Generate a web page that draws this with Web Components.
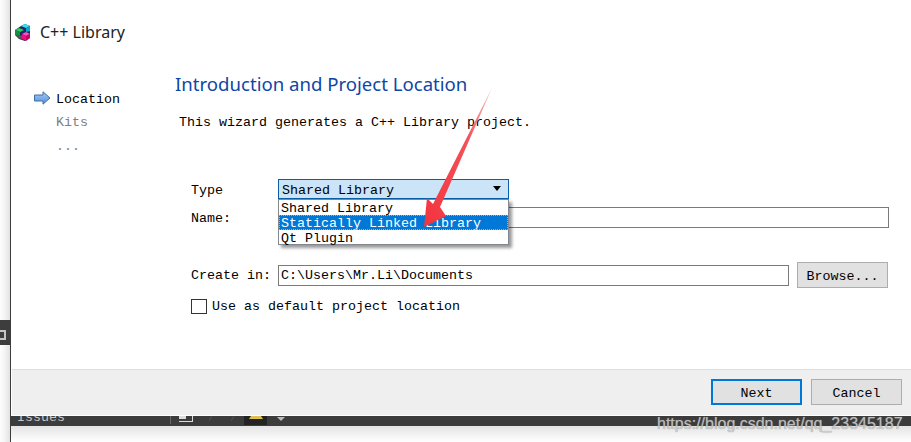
<!DOCTYPE html>
<html>
<head>
<meta charset="utf-8">
<title>C++ Library</title>
<style>
  html, body { margin: 0; padding: 0; background: #fff; }
  body { width: 911px; height: 442px; overflow: hidden; font-family: "Liberation Mono", monospace; font-size: 13.33px; color: #000; }
</style>
</head>
<body>

<wizard-page>
  <wizard-header slot="header">C++ Library</wizard-header>
  <wizard-steps slot="steps"></wizard-steps>

  <h-title>Introduction and Project Location</h-title>
  <intro-text>This wizard generates a C++ Library project.</intro-text>

  <form-row label="Type" nudge style="margin-top:46px">
    <qt-combo value="Shared Library"></qt-combo>
  </form-row>
  <form-row label="Name:" nudge style="margin-top:8px">
    <qt-field></qt-field>
  </form-row>
  <form-row label="Create in:" style="margin-top:34px">
    <qt-field value="C:\Users\Mr.Li\Documents"></qt-field>
    <qt-button style="margin-left:8px;margin-right:1px">Browse...</qt-button>
  </form-row>
  <qt-check style="margin-top:11px">Use as default project location</qt-check>

  <wizard-footer slot="footer">
    <qt-button primary>Next</qt-button>
    <qt-button>Cancel</qt-button>
  </wizard-footer>
  <issues-bar slot="bar"></issues-bar>
</wizard-page>

<red-arrow></red-arrow>
<water-mark>https://blog.csdn.net/qq_23345187</water-mark>

<script>
// small helper so each element only has to give its markup
class Base extends HTMLElement {
  constructor() {
    super();
    this.attachShadow({ mode: 'open' });
    this.shadowRoot.innerHTML = this.markup();
  }
  markup() { return ''; }
}

class WizardPage extends Base {
  markup() {
    return `
    <style>
      :host { display: flex; width: 911px; height: 442px; position: relative; }
      .strip { width: 10px; flex: none; background: linear-gradient(to right, #fdfdfd, #f6f6f6 40%, #e2e2e2); }
      .tab { position: absolute; left: 0; top: 320px; width: 10px; height: 25px; background: #3d3d3d; }
      .tab i { position: absolute; left: -3px; top: 10px; width: 5px; height: 6px; border: 2px solid #c4c4c4; }
      .line { width: 1px; flex: none; background: #3c3c3c; }
      .main { flex: 1; display: flex; flex-direction: column; min-width: 0; }
      .body { display: flex; flex: 1; min-height: 0; }
      .content { flex: 1; display: flex; flex-direction: column; padding: 5px 22px 0 0; min-width: 0; }
      .fade { height: 16px; flex: none; background: linear-gradient(#e4e4e4, #fff); }
    </style>
    <div class="strip"></div>
    <div class="tab"><i></i></div>
    <div class="line"></div>
    <div class="main">
      <slot name="header"></slot>
      <div class="body">
        <slot name="steps"></slot>
        <div class="content"><slot></slot></div>
      </div>
      <slot name="footer"></slot>
      <slot name="bar"></slot>
      <div class="fade"></div>
    </div>`;
  }
}

class WizardHeader extends Base {
  markup() {
    return `
    <style>
      :host { display: flex; align-items: center; height: 64px; padding: 0 0 0 4px; box-sizing: border-box; font: 16px "Noto Sans", "Open Sans", sans-serif; color: #222; }
      svg { width: 16px; height: 17px; margin-right: 9px; flex: none; }
    </style>
    <svg viewBox="0 0 16 17">
      <path d="M0 6 6 2 10 0 15 2V14L10 17 4 15 0 11Z" fill="#1b2a6a"/>
      <path d="M6 2 10 0 15 2 11 4Z" fill="#36e4ee"/>
      <path d="M11 4 15 2V7L11 8Z" fill="#0aa6c8"/>
      <path d="M0 6 4 4 9 6 5 8Z" fill="#2fd05a"/>
      <path d="M0 6 5 8V12L0 11Z" fill="#149038"/>
      <path d="M7 10 11 8 15 10 11 12Z" fill="#ff4fc0"/>
      <path d="M7 10 11 12V17L7 15Z" fill="#e8107c"/>
      <path d="M11 12 15 10V14L11 17Z" fill="#c00a60"/>
      <path d="M1 11 5 12 7 11V15L3 14Z" fill="#55584a"/>
    </svg>
    <slot></slot>`;
  }
}

class WizardSteps extends Base {
  markup() {
    return `
    <style>
      :host { display: block; width: 164px; flex: none; padding: 22px 0 0 23px; box-sizing: border-box; }
      div { display: flex; align-items: center; height: 24px; box-sizing: border-box; color: #808080; padding-left: 22px; }
      .on { color: #000; padding-left: 0; padding-top: 2px; }
      svg { width: 17px; height: 14px; margin: -2px 5px 0 0; flex: none; }
    </style>
    <div class="on">
      <svg viewBox="0 0 17 14">
        <defs><linearGradient id="a" x1="0" y1="0" x2="0" y2="1"><stop offset="0" stop-color="#a9ccf5"/><stop offset="1" stop-color="#4f8fdc"/></linearGradient></defs>
        <path d="M.5 4H9V.8L16 7 9 13.2V10H.5Z" fill="url(#a)" stroke="#3f6ea8"/>
      </svg>
      Location
    </div>
    <div>Kits</div>
    <div>...</div>`;
  }
}

class HTitle extends Base {
  markup() {
    return `
    <style>
      :host { display: block; height: 29px; font: 18.6px/29px "Noto Sans", "Open Sans", sans-serif; color: #0f46a6; white-space: nowrap; }
    </style>
    <slot></slot>`;
  }
}

class IntroText extends Base {
  markup() {
    return `
    <style>
      :host { display: block; margin: 15px 0 0 4px; height: 20px; line-height: 20px; white-space: nowrap; }
    </style>
    <slot></slot>`;
  }
}

class FormRow extends Base {
  markup() {
    return `
    <style>
      :host { display: flex; align-items: center; padding-left: 16px; }
      :host([nudge]) label { padding-top: 2px; }
      label { width: 87px; flex: none; }
    </style>
    <label>${this.getAttribute('label') || ''}</label>
    <slot></slot>`;
  }
}

class QtField extends Base {
  markup() {
    return `
    <style>
      :host { display: block; flex: 1; height: 21px; box-sizing: border-box; border: 1px solid #7a7a7a; background: #fff; line-height: 19px; padding-left: 2px; white-space: nowrap; }
    </style>
    ${this.getAttribute('value') || ''}`;
  }
}

class QtCombo extends Base {
  markup() {
    const v = this.getAttribute('value');
    return `
    <style>
      :host { display: block; flex: 1; position: relative; height: 20px; }
      .box { width: 231px; height: 20px; box-sizing: border-box; border: 1px solid #0a5ea8; background: #cce4f7; line-height: 21px; padding-left: 3px; position: relative; }
      .box::after { content: ""; position: absolute; right: 7px; top: 6px; border: 4px solid transparent; border-top: 5px solid #000; border-bottom: 0; }
      .pop { position: absolute; left: 0; top: 20px; width: 231px; box-sizing: border-box; height: 46px; border: 1px solid #828790; background: #fff; box-shadow: 3px 3px 3px rgba(0,0,0,.4); z-index: 2; line-height: 17px; }
      .pop div { height: 15px; padding-left: 2px; white-space: nowrap; }
      .pop .sel { background: #0078d7; color: #fff; outline: 1px dotted #f0a040; outline-offset: -1px; }
    </style>
    <div class="box">${v}</div>
    <div class="pop">
      <div>Shared Library</div>
      <div class="sel">Statically Linked Library</div>
      <div>Qt Plugin</div>
    </div>`;
  }
}

class QtButton extends Base {
  markup() {
    return `
    <style>
      :host { display: flex; align-items: center; justify-content: center; flex: none; width: 91px; height: 26px; box-sizing: border-box; padding-top: 2px; background: #e1e1e1; border: 1px solid #adadad; }
      :host([primary]) { border: 2px solid #0078d7; }
    </style>
    <slot></slot>`;
  }
}

class QtCheck extends Base {
  markup() {
    return `
    <style>
      :host { display: flex; align-items: center; padding-left: 16px; height: 15px; }
      i { width: 16px; height: 15px; box-sizing: border-box; border: 1px solid #333; background: #fff; margin-right: 5px; flex: none; }
    </style>
    <i></i><slot></slot>`;
  }
}

class WizardFooter extends Base {
  markup() {
    return `
    <style>
      :host { display: flex; justify-content: flex-end; align-items: flex-start; gap: 9px; flex: none; height: 47px; margin-left: 1px; box-sizing: border-box; padding: 9px 9px 0 0; background: #efefef; border-top: 1px solid #dedede; border-bottom: 1px solid #fff; }
    </style>
    <slot></slot>`;
  }
}

class IssuesBar extends Base {
  markup() {
    return `
    <style>
      :host { display: flex; flex: none; height: 10px; overflow: hidden; background: #3c3c3c; color: #c8c8c8; align-items: flex-start; }
      .t { margin: -6px 0 0 6px; line-height: 15px; width: 153px; }
      .sep { width: 1px; height: 8px; background: #666; margin-right: 8px; }
      .pg { width: 13px; height: 5px; margin-right: 17px; border-right: 1px solid #ddd; border-bottom: 1px solid #ddd; background: linear-gradient(to right, #ddd 55%, transparent 55%); background-size: 100% 3px; background-repeat: no-repeat; }
      .nav { width: 1px; height: 5px; background: #555; margin-right: 21px; transform: rotate(35deg); }
      .nav.l { margin-right: 11px; }
      .warn { display: flex; justify-content: center; width: 23px; height: 9px; background: #232323; margin-right: 10px; }
      .warn b { width: 0; height: 0; border: 7px solid transparent; border-bottom: 10px solid #e0c050; border-top: 0; margin-top: -7px; }
      .fil { width: 0; height: 0; margin-top: 1px; border: 4px solid transparent; border-top: 4px solid #bbb; border-bottom: 0; }
    </style>
    <div class="t">Issues</div>
    <div class="sep"></div>
    <div class="pg"></div>
    <div class="nav"></div>
    <div class="nav l"></div>
    <div class="warn"><b></b></div>
    <div class="fil"></div>`;
  }
}

class RedArrow extends Base {
  markup() {
    return `
    <style>
      :host { display: block; position: absolute; left: 420px; top: 85px; width: 76px; height: 146px; z-index: 5; pointer-events: none; }
      svg { display: block; width: 100%; height: 100%; }
    </style>
    <svg viewBox="420 85 76 146">
      <defs><linearGradient id="r" x1="1" y1="0" x2="0" y2="1"><stop offset="0" stop-color="#f9c0c0"/><stop offset=".35" stop-color="#f4525a"/><stop offset="1" stop-color="#f2343e"/></linearGradient></defs>
      <path d="M492 88 440 207 446 216 424 227 427 198 433 204Z" fill="url(#r)"/>
    </svg>`;
  }
}

class WaterMark extends Base {
  markup() {
    return `
    <style>
      :host { display: block; position: absolute; left: 657px; top: 414px; z-index: 6; font: 16px/20px "Liberation Sans", sans-serif; color: #c9c9c9; opacity: .9; text-shadow: 0 0 1px #8a8a8a; white-space: nowrap; }
    </style>
    <slot></slot>`;
  }
}

customElements.define('wizard-page', WizardPage);
customElements.define('wizard-header', WizardHeader);
customElements.define('wizard-steps', WizardSteps);
customElements.define('h-title', HTitle);
customElements.define('intro-text', IntroText);
customElements.define('form-row', FormRow);
customElements.define('qt-field', QtField);
customElements.define('qt-combo', QtCombo);
customElements.define('qt-button', QtButton);
customElements.define('qt-check', QtCheck);
customElements.define('wizard-footer', WizardFooter);
customElements.define('issues-bar', IssuesBar);
customElements.define('red-arrow', RedArrow);
customElements.define('water-mark', WaterMark);
</script>
</body>
</html>
